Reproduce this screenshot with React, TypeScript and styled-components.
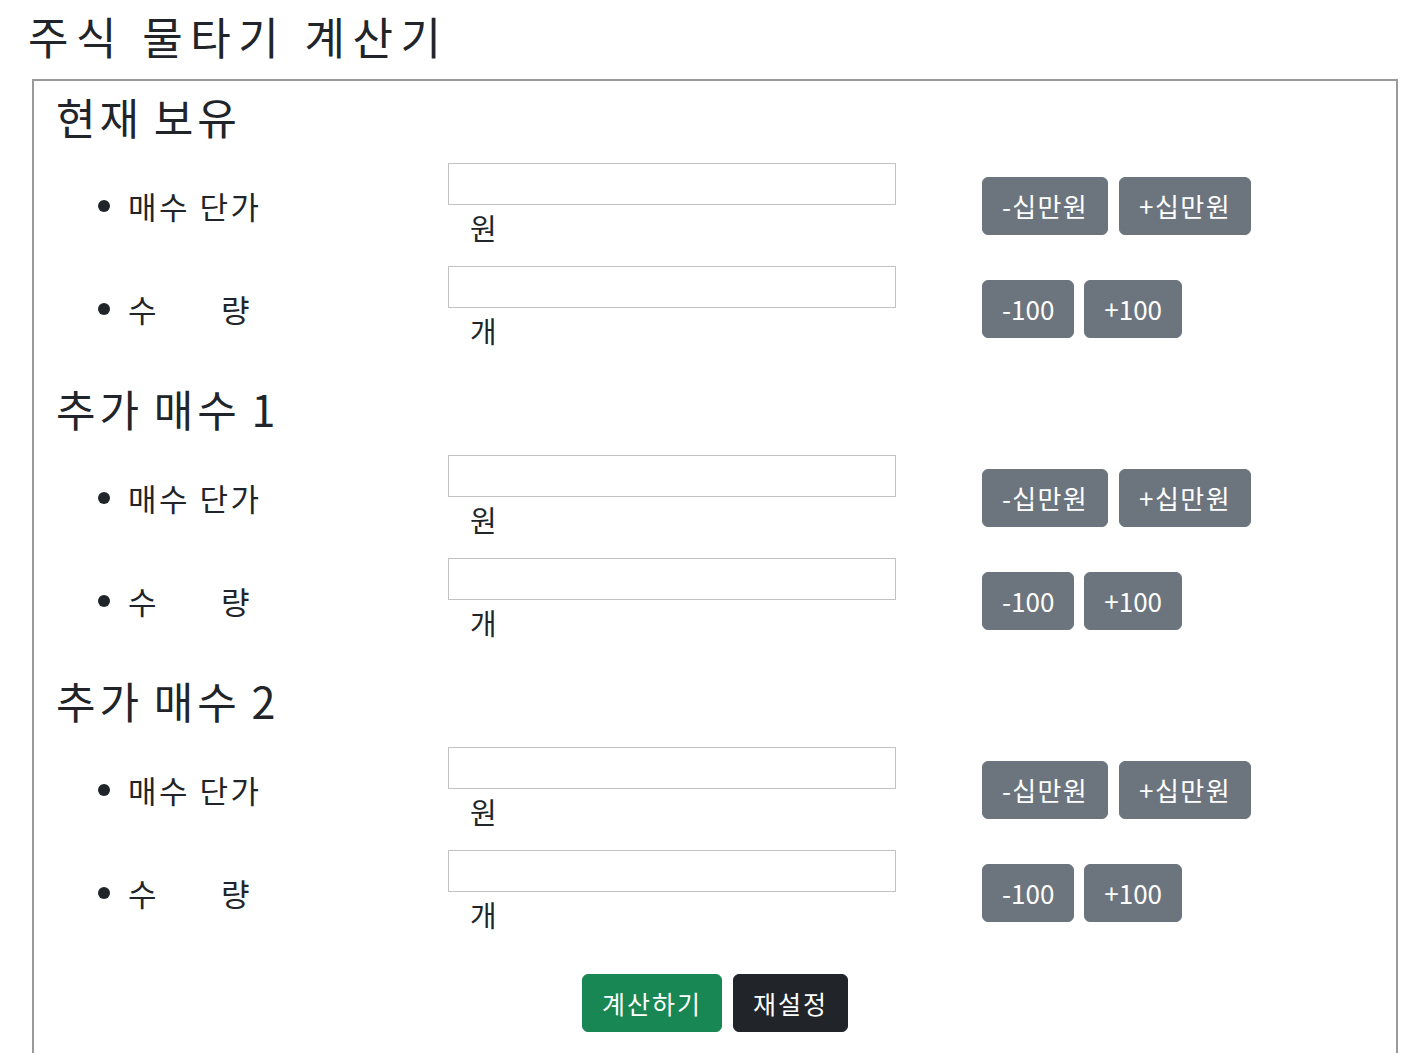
import React from "react";
import styled, { createGlobalStyle } from "styled-components";

const GlobalStyle = createGlobalStyle`
  html, body { margin: 0; padding: 0; background: #ffffff; }
  body {
    font-family: "Noto Sans CJK KR", "Noto Sans", sans-serif;
    color: #212529;
  }
  * { box-sizing: border-box; }
`;

const Page = styled.div`
  padding: 0 16px 0 28px;
`;

const Title = styled.h1`
  margin: 0 0 15px 0;
  padding-top: 9px;
  font-size: 44px;
  line-height: 55px;
  font-weight: 400;
  letter-spacing: 7.5px;
  word-spacing: 1px;
`;

const Card = styled.div`
  margin-left: 4px;
  border: 2px solid #9a9a9a;
  border-bottom: none;
  padding: 10px 0 40px 0;
`;

const SectionTitle = styled.h2`
  margin: 0 0 22px 0;
  padding-left: 22px;
  font-size: 43px;
  line-height: 50px;
  font-weight: 400;
  letter-spacing: 4px;
  word-spacing: -3px;
`;

const List = styled.ul`
  list-style: none;
  margin: 0 0 31px 0;
  padding: 0;
  display: flex;
  flex-direction: column;
  gap: 17px;
`;

const Row = styled.li`
  display: flex;
  align-items: center;
  padding-left: 64px;
`;

const Bullet = styled.span`
  width: 12px;
  height: 12px;
  border-radius: 50%;
  background: #212529;
  margin-right: 18px;
  flex: none;
`;

const Label = styled.span`
  width: 320px;
  flex: none;
  display: flex;
  font-size: 31px;
  line-height: 44px;
  letter-spacing: 2.5px;
  white-space: pre;
`;

const Spacer = styled.span<{ $w: number }>`
  display: inline-block;
  width: ${(p) => p.$w}px;
`;

const InputBlock = styled.div`
  width: 448px;
  flex: none;
  display: flex;
  flex-direction: column;
`;

const Input = styled.input`
  width: 448px;
  height: 42px;
  border: 1px solid #c2c2c2;
  border-radius: 0;
  padding: 0 8px;
  font-size: 24px;
  font-family: inherit;
  outline: none;
  background: #fff;
`;

const Unit = styled.span`
  padding-left: 22px;
  font-size: 29px;
  line-height: 44px;
  height: 44px;
`;

const ButtonGroup = styled.div<{ $gap: number }>`
  display: flex;
  gap: ${(p) => p.$gap}px;
  margin-left: 86px;
`;

type Variant = "secondary" | "success" | "dark";
const colors: Record<Variant, string> = {
  secondary: "#6c757d",
  success: "#198754",
  dark: "#212529",
};

const Btn = styled.button<{ $variant?: Variant; $size?: number; $ls?: number }>`
  font-family: "Noto Sans CJK KR", "Noto Sans", sans-serif;
  font-size: ${(p) => p.$size ?? 26}px;
  letter-spacing: ${(p) => p.$ls ?? 0}px;
  line-height: 36px;
  padding: 10px 19px;
  border-radius: 6px;
  color: #fff;
  cursor: pointer;
  background: ${(p) => colors[p.$variant ?? "secondary"]};
  border: 1px solid ${(p) => colors[p.$variant ?? "secondary"]};
`;

const Actions = styled.div`
  display: flex;
  justify-content: center;
  gap: 11px;
  padding-top: 7px;
`;

type Field = { kind: "price" | "qty" };

const FieldRow: React.FC<Field> = ({ kind }) => (
  <Row>
    <Bullet />
    <Label>
      {kind === "price" ? (
        "매수 단가"
      ) : (
        <>
          <span>수</span>
          <Spacer $w={62} />
          <span>량</span>
        </>
      )}
    </Label>
    <InputBlock>
      <Input type="text" />
      <Unit>{kind === "price" ? "원" : "개"}</Unit>
    </InputBlock>
    {kind === "price" ? (
      <ButtonGroup $gap={11}>
        <Btn $ls={1.3}>-십만원</Btn>
        <Btn $ls={1.5}>+십만원</Btn>
      </ButtonGroup>
    ) : (
      <ButtonGroup $gap={10}>
        <Btn>-100</Btn>
        <Btn>+100</Btn>
      </ButtonGroup>
    )}
  </Row>
);

const sections = ["현재 보유", "추가 매수 1", "추가 매수 2"];

export default function App() {
  return (
    <>
      <GlobalStyle />
      <Page>
        <Title>주식 물타기 계산기</Title>
        <Card>
          {sections.map((s) => (
            <React.Fragment key={s}>
              <SectionTitle>{s}</SectionTitle>
              <List>
                <FieldRow kind="price" />
                <FieldRow kind="qty" />
              </List>
            </React.Fragment>
          ))}
          <Actions>
            <Btn $variant="success" $size={25} $ls={2}>계산하기</Btn>
            <Btn $variant="dark" $size={25} $ls={2}>재설정</Btn>
          </Actions>
        </Card>
      </Page>
    </>
  );
}
